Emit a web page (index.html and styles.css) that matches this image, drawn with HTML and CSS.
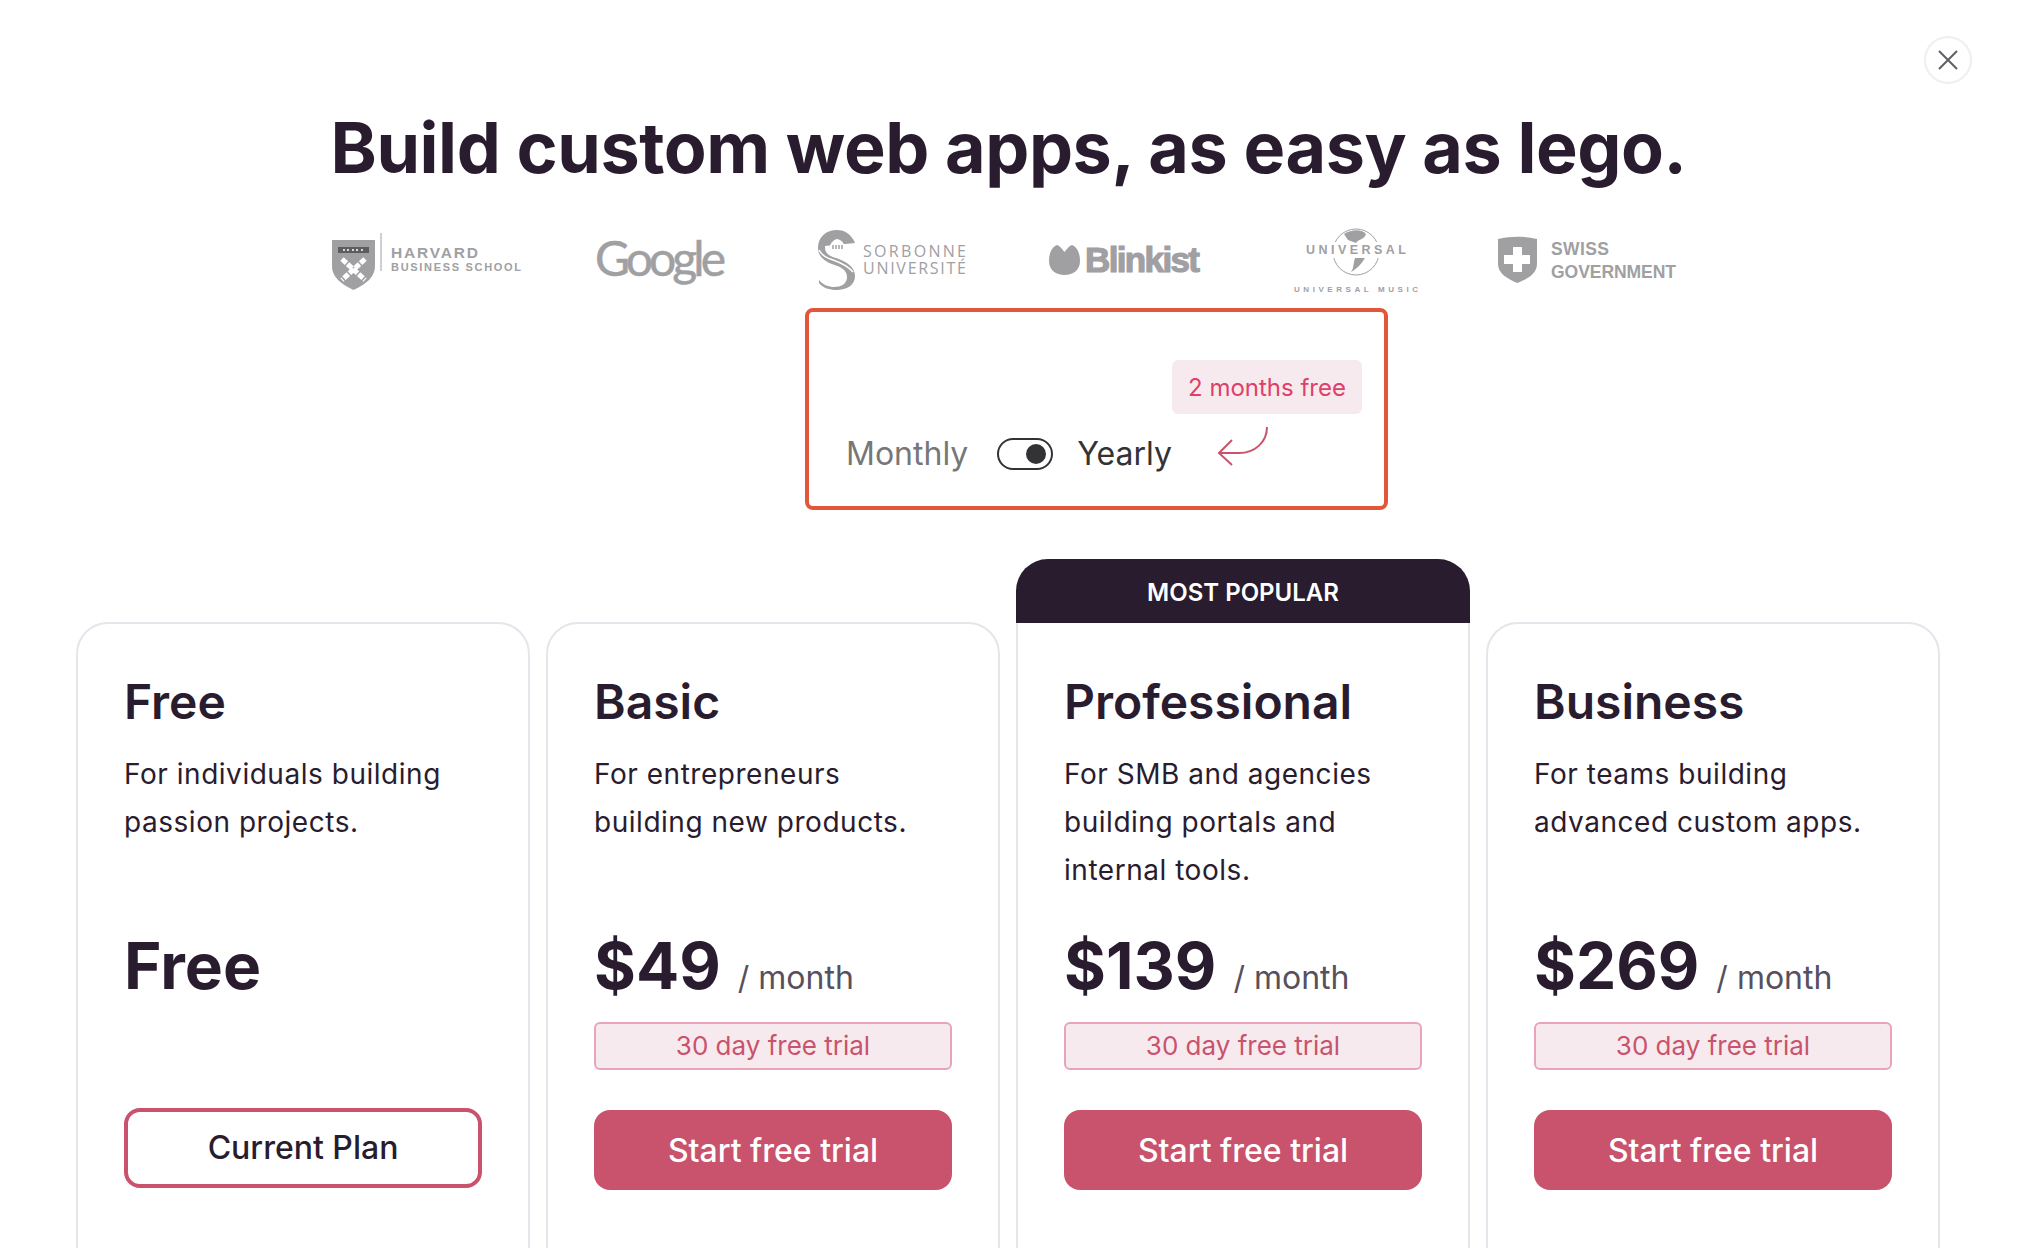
FILE: index.html
```html
<!DOCTYPE html>
<html lang="en">
<head>
<meta charset="utf-8">
<title>Pricing</title>
<link rel="stylesheet" href="styles.css">
</head>
<body>
<button class="close" aria-label="Close">
  <svg width="20" height="20" viewBox="0 0 20 20"><path d="M1 1L19 19M19 1L1 19" stroke="#5f5f66" stroke-width="2" fill="none"/></svg>
</button>
<h1 class="headline">Build custom web apps, as easy as lego.</h1>

<div class="logos">
  <svg class="logo" width="192" height="80" viewBox="0 0 192 80">
    <path d="M1 20H44V46C44 58 33 65 22.500 70C12 65 1 58 1 46Z" fill="#a0a0a3"/>
    <rect x="7" y="27" width="31" height="6" fill="#5d5d60"/>
    <path d="M13 29V31M17 29V31M22 29V31M26 29V31M31 29V31" stroke="#d8d8da" stroke-width="2"/>
    <path d="M11 39L34 60M34 39L11 60" stroke="#fff" stroke-width="5" stroke-dasharray="6 1.500"/>
    <rect x="49.500" y="13" width="1" height="38" fill="#a0a0a3"/>
    <text class="lg-text" x="60" y="38" font-size="15.500" font-weight="700" textLength="87">HARVARD</text>
    <text class="lg-text" x="60" y="51" font-size="11" font-weight="700" textLength="130">BUSINESS SCHOOL</text>
  </svg>
  <svg class="logo" width="150" height="80" viewBox="0 0 150 80">
    <text class="lg-google" x="0" y="56" font-size="48" textLength="131" stroke="#a0a0a3" stroke-width=".5">Google</text>
  </svg>
  <svg class="logo" width="159" height="80" viewBox="0 0 159 80">
    <path d="M38 23C34 14 28 10 20 10C9 10 1 17 1 28C1 36 7 41 15 44C24 47 30 50 30 57C30 64 24 67 17 67C12 67 6 65 2 60V63C6 68 13 70 19 70C30 70 38 65 38 56C38 46 28 41 19 38C12 36 8 33 8 28V26Z" fill="#a0a0a3"/>
    <path d="M2 30C8 42 24 38 36 52" stroke="#fff" stroke-width="1.500" fill="none"/>
    <path d="M12 31C12 24 16 20 20 19C25 20 28 24 29 30C24 33 17 33 12 31Z" fill="#fff"/>
    <path d="M16 25V29M19 25V29M22 25V29M25 25V29" stroke="#a0a0a3" stroke-width="1.500"/>
    <text class="lg-soft" x="46" y="37" font-size="16" textLength="103">SORBONNE</text>
    <text class="lg-soft" x="46" y="54" font-size="16" textLength="103">UNIVERSITÉ</text>
  </svg>
  <svg class="logo" width="174" height="80" viewBox="0 0 174 80">
    <path d="M16.500 32C14 29 12 26 9 25C4 27 1 33 1 41C1 50 8 55 16.500 55C25 55 32 50 32 41C32 33 29 27 24 25C21 26 19 29 16.500 32Z" fill="#a0a0a3"/>
    <text class="lg-text" x="37" y="52" font-size="35" font-weight="700" textLength="115" stroke="#a0a0a3" stroke-width="1.200">Blinkist</text>
  </svg>
  <svg class="logo" width="131" height="80" viewBox="0 0 131 80">
    <circle cx="62" cy="32" r="23" fill="none" stroke="#a0a0a3" stroke-width="1"/>
    <rect x="8" y="22" width="108" height="16" fill="#fff"/>
    <path d="M50 14C58 9 68 9 72 14C70 20 64 19 62 23L54 20Z" fill="#a0a0a3"/>
    <path d="M71 38H61C59 44 60 48 57 52C64 48 68 43 71 38Z" fill="#a0a0a3"/>
    <text class="lg-text" x="12" y="34" font-size="12.500" font-weight="700" textLength="100">UNIVERSAL</text>
    <text class="lg-text" x="0" y="72" font-size="8" font-weight="700" textLength="124">UNIVERSAL MUSIC</text>
  </svg>
  <svg class="logo" width="181" height="80" viewBox="0 0 181 80">
    <path d="M1 19C14 16 28 16 40 19V44C40 53 31 59 20.500 63C10 59 1 53 1 44Z" fill="#a0a0a3"/>
    <path d="M16 27H25V35H33V44H25V52H16V44H7V35H16Z" fill="#fff"/>
    <text class="lg-text" x="54" y="35" font-size="17.500" font-weight="700" textLength="58">SWISS</text>
    <text class="lg-text" x="54" y="58" font-size="17.500" font-weight="700" textLength="125">GOVERNMENT</text>
  </svg>
</div>

<div class="billing-wrap">
  <div class="billing">
    <div class="badge">2 months free</div>
    <div class="billing-row">
      <span class="period period-off">Monthly</span>
      <span class="switch"><span class="knob"></span></span>
      <span class="period">Yearly</span>
      <svg class="arrow" width="52" height="40" viewBox="0 0 52 40"><path d="M50 1C50 16 38 27 22 27H2M15 14L2 27L15 39" fill="none" stroke="#c9536c" stroke-width="2"/></svg>
    </div>
  </div>
</div>

<div class="plans">
  <section class="plan">
    <h2 class="plan-name">Free</h2>
    <p class="plan-desc">For individuals building passion projects.</p>
    <div class="price"><span class="amount">Free</span></div>
    <div class="trial trial-empty"></div>
    <a class="cta cta-current">Current Plan</a>
  </section>
  <section class="plan">
    <h2 class="plan-name">Basic</h2>
    <p class="plan-desc">For entrepreneurs<br>building new products.</p>
    <div class="price"><span class="amount">$49</span><span class="per">/ month</span></div>
    <div class="trial">30 day free trial</div>
    <a class="cta">Start free trial</a>
  </section>
  <section class="plan plan-popular">
    <div class="ribbon">MOST POPULAR</div>
    <h2 class="plan-name">Professional</h2>
    <p class="plan-desc">For SMB and agencies building portals and internal tools.</p>
    <div class="price"><span class="amount">$139</span><span class="per">/ month</span></div>
    <div class="trial">30 day free trial</div>
    <a class="cta">Start free trial</a>
  </section>
  <section class="plan">
    <h2 class="plan-name">Business</h2>
    <p class="plan-desc">For teams building<br>advanced custom apps.</p>
    <div class="price"><span class="amount">$269</span><span class="per">/ month</span></div>
    <div class="trial">30 day free trial</div>
    <a class="cta">Start free trial</a>
  </section>
</div>
</body>
</html>
```
FILE: styles.css
```css
* { box-sizing: border-box; }
html, body { margin: 0; height: 1248px; overflow: hidden; }
body {
  position: relative;
  background: #fff;
  color: #291c2e;
  font-family: Inter, "Liberation Sans", sans-serif;
}
.close {
  position: absolute;
  top: 36px;
  left: 1924px;
  width: 48px;
  height: 48px;
  padding: 0;
  display: flex;
  align-items: center;
  justify-content: center;
  background: #fff;
  border: 2px solid #eeeef3;
  border-radius: 50%;
}
.headline {
  margin: 0;
  padding: 100px 3px 0 0;
  height: 196px;
  text-align: center;
  font-size: 70px;
  line-height: 96px;
  font-weight: 700;
  letter-spacing: -.43px;
}
.logos {
  display: flex;
  gap: 72px;
  margin: 24px 0 0 331px;
  height: 80px;
}
.logo { display: block; flex: none; }
.lg-text { font-family: "Liberation Sans", sans-serif; fill: #a0a0a3; }
.lg-soft { font-family: "Open Sans", sans-serif; fill: #a0a0a3; }
.lg-google { font-family: Lato, sans-serif; fill: #a0a0a3; }
.billing-wrap { display: flex; margin: 8px 0 0 805px; }
.billing {
  width: 583px;
  height: 202px;
  border: 4px solid #e2573a;
  border-radius: 8px;
  padding: 48px 22px 0 37px;
  display: flex;
  flex-direction: column;
}
.badge {
  align-self: flex-end;
  width: 190px;
  height: 54px;
  display: flex;
  align-items: center;
  justify-content: center;
  background: #f7eaef;
  border-radius: 6px;
  color: #dd4069;
  font-size: 24px;
}
.billing-row {
  display: flex;
  align-items: center;
  height: 48px;
  margin-top: 16px;
}
.period { font-size: 32px; line-height: 48px; color: #333336; }
.period-off { color: #777; }
.switch {
  width: 56px;
  height: 32px;
  margin: 0 24px 0 29px;
  border: 2.500px solid #333336;
  border-radius: 16px;
  display: flex;
  align-items: center;
  justify-content: flex-end;
  padding-right: 5px;
}
.knob { width: 20px; height: 20px; border-radius: 50%; background: #333336; }
.arrow { margin: -16px 0 0 45px; flex: none; }
.plans {
  display: grid;
  grid-template-columns: repeat(4, 454px);
  gap: 16px;
  margin: 112px 0 0 76px;
}
.plan {
  position: relative;
  height: 800px;
  padding: 48px 46px 0;
  border: 2px solid #e5e5eb;
  border-radius: 32px;
}
.plan-popular {
  border-top: none;
  border-radius: 0;
  padding-top: 50px;
}
.ribbon {
  position: absolute;
  left: -2px;
  right: -2px;
  top: -63px;
  height: 64px;
  padding-top: 3px;
  display: flex;
  align-items: center;
  justify-content: center;
  background: #291c2e;
  color: #fff;
  border-radius: 32px 32px 0 0;
  font-size: 24px;
  font-weight: 600;
}
.plan-name {
  margin: 0;
  font-size: 48px;
  line-height: 60px;
  font-weight: 600;
}
.plan-desc {
  margin: 18px 0 0;
  height: 144px;
  font-size: 28px;
  line-height: 48px;
  letter-spacing: .53px;
}
.price {
  margin-top: 34px;
  height: 76px;
  display: flex;
  align-items: baseline;
}
.amount {
  font-size: 64px;
  line-height: 76px;
  font-weight: 700;
}
.per { margin-left: 17px; font-size: 32px; color: #58505c; }
.trial {
  margin-top: 18px;
  height: 48px;
  padding-bottom: 1px;
  display: flex;
  align-items: center;
  justify-content: center;
  background: #f7eaef;
  border: 2px solid #e8a5b8;
  border-radius: 6px;
  color: #c9536c;
  font-size: 26px;
}
.trial-empty { visibility: hidden; }
.cta {
  display: flex;
  align-items: center;
  justify-content: center;
  height: 80px;
  margin-top: 40px;
  border-radius: 16px;
  background: #c9536c;
  color: #fff;
  font-size: 32px;
  font-weight: 500;
}
.cta-current {
  margin-top: 38px;
  padding-bottom: 2px;
  background: #fff;
  color: #291c2e;
  border: 4px solid #c9536c;
}
```
